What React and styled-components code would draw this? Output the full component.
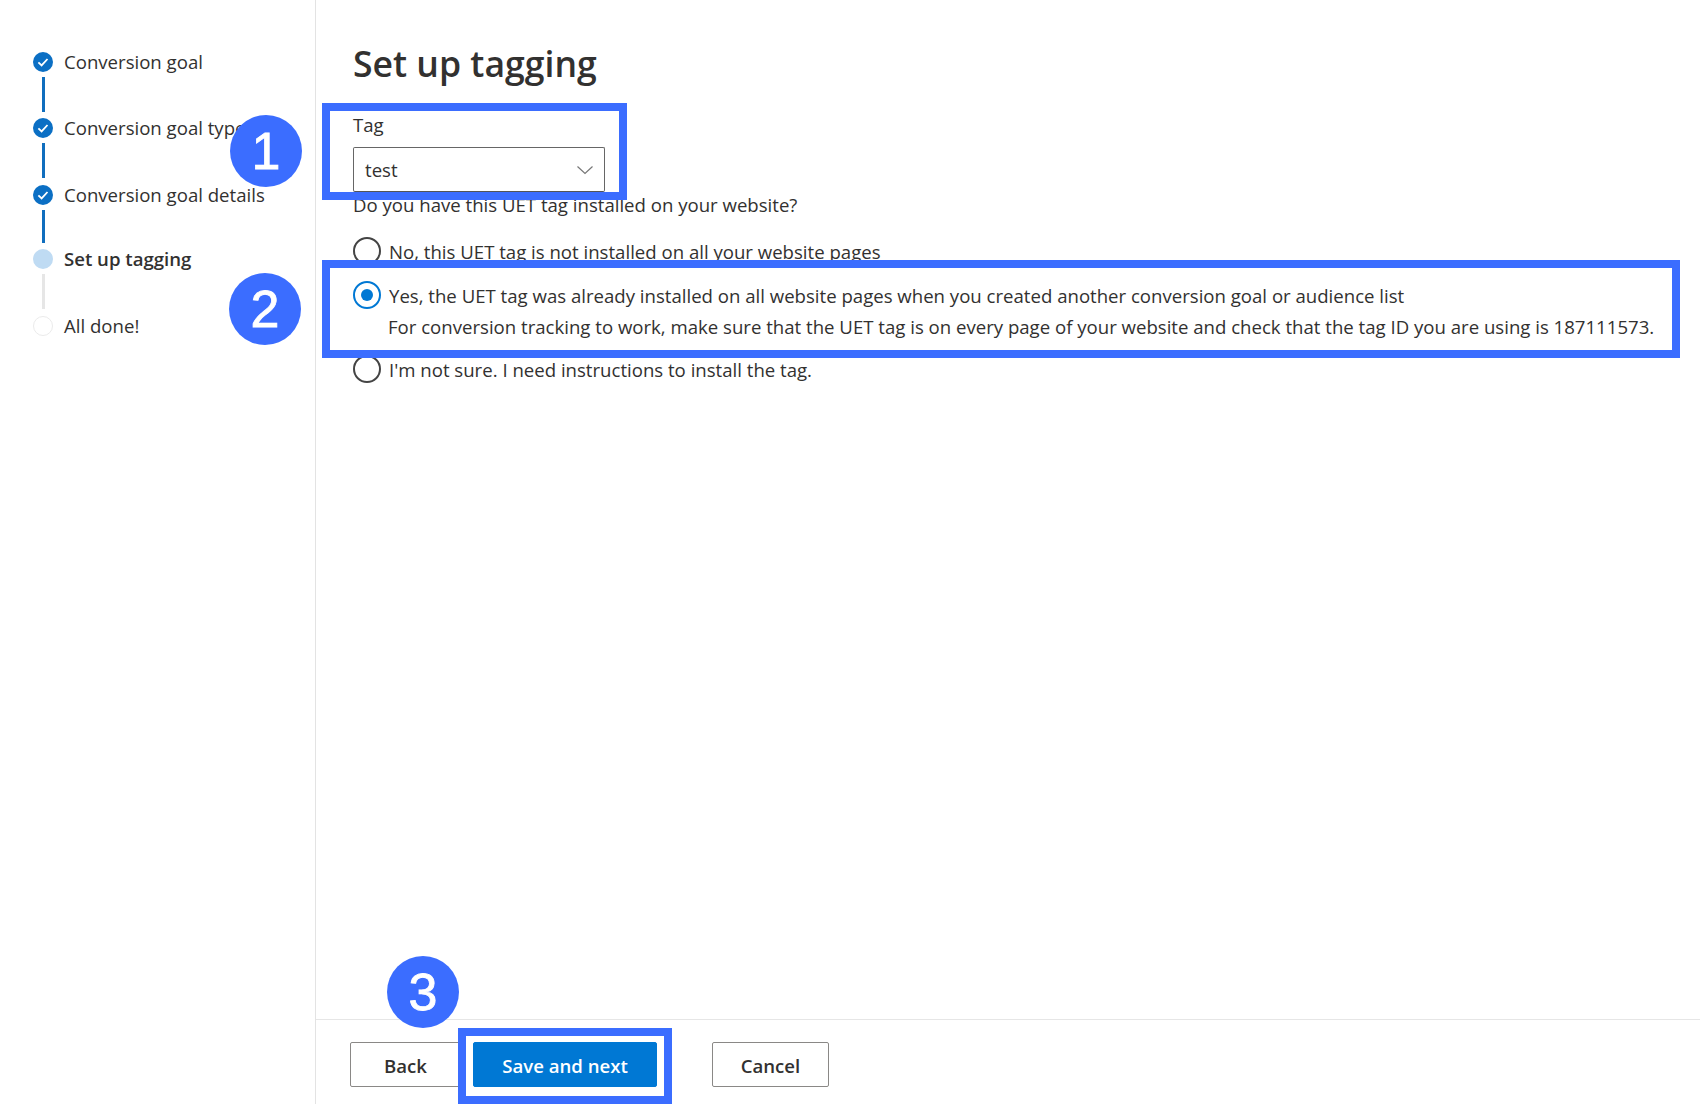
import styled, { createGlobalStyle } from 'styled-components';

const GlobalStyle = createGlobalStyle`
  html, body {
    margin: 0;
    padding: 0;
    background: #fff;
  }
  body {
    font-family: "Open Sans", "Noto Sans", "Liberation Sans", sans-serif;
    color: #323130;
    overflow: hidden;
  }
`;

const Page = styled.div`
  position: relative;
  display: flex;
  width: 1700px;
  height: 1104px;
  overflow: hidden;
`;

const Sidebar = styled.nav`
  box-sizing: border-box;
  width: 316px;
  flex: none;
  padding: 52px 0 0 33px;
  border-right: 1px solid #e3e3e3;
`;

const StepRow = styled.div`
  display: flex;
  align-items: center;
  gap: 11px;
  height: 20px;
  font-size: 18.6px;
  font-weight: ${p => (p.$current ? 600 : 400)};
  white-space: nowrap;
`;

const StepLabel = styled.span`
  margin-top: -2px;
`;

const StepDot = styled.span`
  display: block;
  box-sizing: border-box;
  width: 20px;
  height: 20px;
  border-radius: 50%;
  flex: none;
  background: ${p => (p.$current ? '#bfdbf3' : '#fff')};
  border: ${p => (p.$current ? 'none' : '1px solid #ebebeb')};
`;

const Connector = styled.div`
  width: 3px;
  height: ${p => p.$height}px;
  margin: ${p => p.$top}px 0 ${p => p.$bottom}px 8.5px;
  background: ${p => (p.$done ? '#106ebe' : '#e6e6e6')};
`;

const Main = styled.main`
  flex: 1;
  display: flex;
  flex-direction: column;
  min-width: 0;
`;

const Content = styled.section`
  flex: 1;
  padding: 40px 0 0 37px;
`;

const Title = styled.h1`
  margin: 0 0 27px;
  font-size: 35.6px;
  line-height: 46px;
  font-weight: 600;
  color: #323130;
`;

const FieldLabel = styled.label`
  display: block;
  font-size: 18.6px;
  line-height: 24px;
  height: 34px;
`;

const Select = styled.div`
  box-sizing: border-box;
  display: flex;
  align-items: center;
  justify-content: space-between;
  width: 252px;
  height: 45px;
  padding: 0 10px 0 11px;
  border: 1px solid #666;
  border-bottom-color: #555;
  border-radius: 2px;
  font-size: 18.6px;
`;

const Question = styled.p`
  margin: 1px 0 0;
  font-size: 18.6px;
  line-height: 24px;
`;

const RadioList = styled.div`
  margin-top: 20px;
  display: flex;
  flex-direction: column;
`;

const RadioRow = styled.div`
  display: flex;
  align-items: flex-start;
  gap: 8px;
  margin-bottom: ${p => p.$gap}px;
  font-size: 18.6px;
  line-height: 24px;
  white-space: nowrap;
`;

const RadioCircle = styled.span`
  position: relative;
  box-sizing: border-box;
  display: block;
  width: 28px;
  height: 28px;
  flex: none;
  border-radius: 50%;
  border: 2px solid ${p => (p.$checked ? '#0078d4' : '#444')};
  ${p =>
    p.$checked &&
    `&::after {
      content: '';
      position: absolute;
      inset: 6px;
      border-radius: 50%;
      background: #0078d4;
    }`}
`;

const RadioText = styled.div`
  padding-top: 3px;
`;

const Hint = styled.div`
  margin-top: 7px;
  margin-left: -1px;
`;

const Footer = styled.footer`
  box-sizing: border-box;
  height: 85px;
  padding: 22px 0 0 34px;
  border-top: 1px solid #e6e6e6;
  display: flex;
  align-items: flex-start;
`;

const Button = styled.button`
  box-sizing: border-box;
  height: 45px;
  width: ${p => p.$width}px;
  margin-right: ${p => p.$gap}px;
  border-radius: 2px;
  font-family: inherit;
  font-size: 18.6px;
  font-weight: 600;
  padding: 1px 0 0;
  color: ${p => (p.$primary ? '#fff' : '#323130')};
  background: ${p => (p.$primary ? '#0078d4' : '#fff')};
  border: 1px solid ${p => (p.$primary ? '#0078d4' : '#8a8886')};
`;

const Highlight = styled.div`
  position: absolute;
  box-sizing: border-box;
  left: ${p => p.$left}px;
  top: ${p => p.$top}px;
  width: ${p => p.$width}px;
  height: ${p => p.$height}px;
  border: 8px solid #3b6dff;
`;

const Badge = styled.div`
  position: absolute;
  left: ${p => p.$left}px;
  top: ${p => p.$top}px;
  width: 72px;
  height: 72px;
  border-radius: 50%;
  background: #3b6dff;
  color: #fff;
  display: flex;
  align-items: center;
  justify-content: center;
  font-family: "Liberation Sans", Arial, sans-serif;
  font-size: 52px;
  -webkit-text-stroke: 0.8px #fff;
`;

const CheckDot = () => (
  <svg width="20" height="20" viewBox="0 0 20 20" style={{ flex: 'none' }}>
    <circle cx="10" cy="10" r="10" fill="#0b6fc4" />
    <path d="M5.4 10.4l3.2 3 5.9-6.4" fill="none" stroke="#fff" strokeWidth="1.8" />
  </svg>
);

const Chevron = () => (
  <svg width="18" height="10" viewBox="0 0 18 10">
    <path d="M1.5 1.5L9 8.5l7.5-7" fill="none" stroke="#777" strokeWidth="1.2" />
  </svg>
);

export default function App() {
  return (
    <Page>
      <GlobalStyle />
      <Sidebar>
        <StepRow><CheckDot /><StepLabel>Conversion goal</StepLabel></StepRow>
        <Connector $done $top={5} $height={35} $bottom={6} />
        <StepRow><CheckDot /><StepLabel>Conversion goal type</StepLabel></StepRow>
        <Connector $done $top={5} $height={35} $bottom={7} />
        <StepRow><CheckDot /><StepLabel>Conversion goal details</StepLabel></StepRow>
        <Connector $done $top={5} $height={33} $bottom={6} />
        <StepRow $current><StepDot $current /><StepLabel>Set up tagging</StepLabel></StepRow>
        <Connector $top={5} $height={35} $bottom={7} />
        <StepRow><StepDot /><StepLabel>All done!</StepLabel></StepRow>
      </Sidebar>
      <Main>
        <Content>
          <Title>Set up tagging</Title>
          <FieldLabel>Tag</FieldLabel>
          <Select>
            test
            <Chevron />
          </Select>
          <Question>Do you have this UET tag installed on your website?</Question>
          <RadioList>
            <RadioRow $gap={16}>
              <RadioCircle />
              <RadioText>No, this UET tag is not installed on all your website pages</RadioText>
            </RadioRow>
            <RadioRow $gap={16}>
              <RadioCircle $checked />
              <RadioText>
                Yes, the UET tag was already installed on all website pages when you created another conversion goal or audience list
                <Hint>For conversion tracking to work, make sure that the UET tag is on every page of your website and check that the tag ID you are using is 187111573.</Hint>
              </RadioText>
            </RadioRow>
            <RadioRow $gap={0}>
              <RadioCircle />
              <RadioText>I'm not sure. I need instructions to install the tag.</RadioText>
            </RadioRow>
          </RadioList>
        </Content>
        <Footer>
          <Button $width={111} $gap={12}>Back</Button>
          <Button $primary $width={184} $gap={55}>Save and next</Button>
          <Button $width={117} $gap={0}>Cancel</Button>
        </Footer>
      </Main>
      <Highlight $left={322} $top={103} $width={305} $height={97} />
      <Highlight $left={322} $top={260} $width={1358} $height={98} />
      <Highlight $left={458} $top={1028} $width={214} $height={76} />
      <Badge $left={230} $top={115}>1</Badge>
      <Badge $left={229} $top={273}>2</Badge>
      <Badge $left={387} $top={956}>3</Badge>
    </Page>
  );
}
